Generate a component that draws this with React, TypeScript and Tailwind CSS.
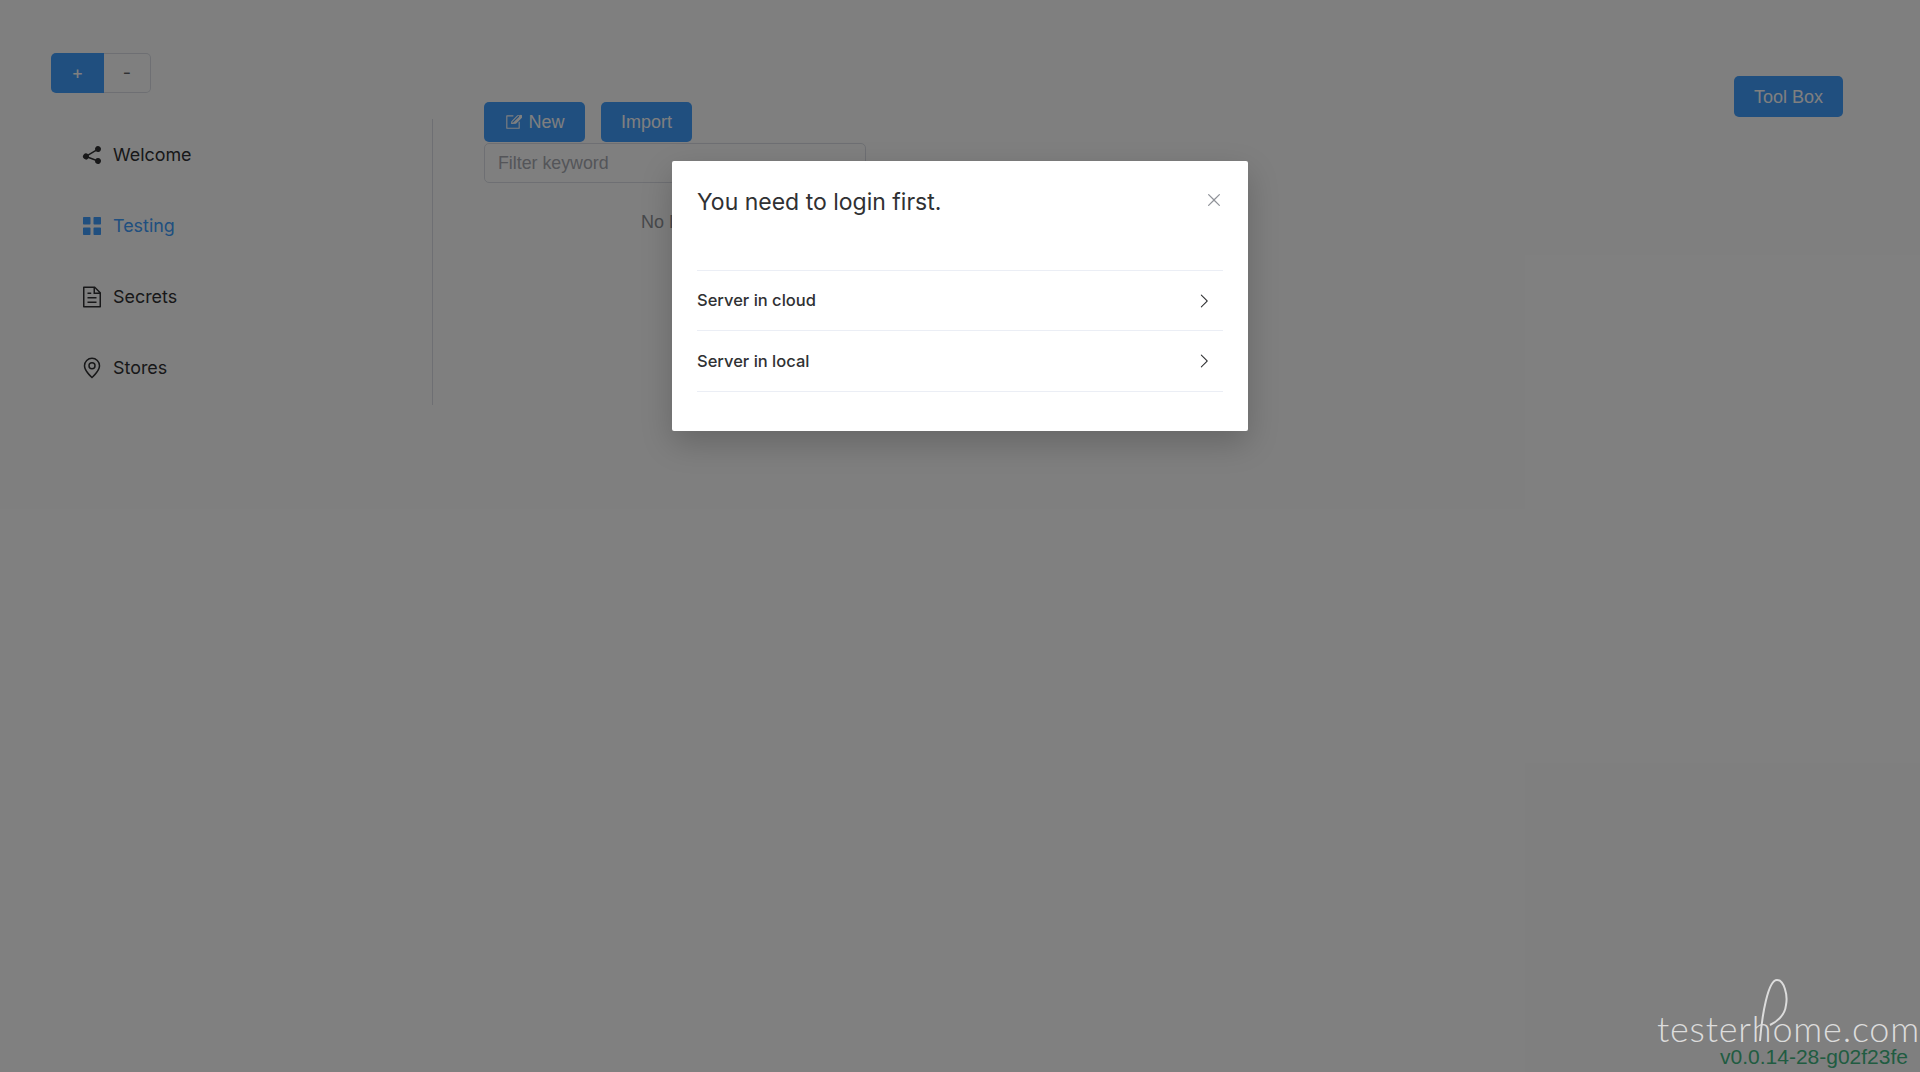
import React from "react";

const Icon = ({ d, className }: { d: string[]; className?: string }) => (
  <svg viewBox="0 0 1024 1024" fill="currentColor" className={className}>
    {d.map((p) => (
      <path key={p} d={p} />
    ))}
  </svg>
);

const share = ["M679.872 348.8l-301.76 188.608a127.808 127.808 0 0 1 5.12 52.16l279.936 104.96a128 128 0 1 1-22.464 59.904l-279.872-104.96a128 128 0 1 1-16.64-166.272l301.696-188.608a128 128 0 1 1 33.92 54.272z"];
const grid = ["M160 448a32 32 0 0 1-32-32V160.064a32 32 0 0 1 32-32h256a32 32 0 0 1 32 32V416a32 32 0 0 1-32 32H160zm448 0a32 32 0 0 1-32-32V160.064a32 32 0 0 1 32-32h255.936a32 32 0 0 1 32 32V416a32 32 0 0 1-32 32H608zM160 896a32 32 0 0 1-32-32V608a32 32 0 0 1 32-32h256a32 32 0 0 1 32 32v256a32 32 0 0 1-32 32H160zm448 0a32 32 0 0 1-32-32V608a32 32 0 0 1 32-32h255.936a32 32 0 0 1 32 32v256a32 32 0 0 1-32 32H608z"];
const doc = ["M832 384H576V128H192v768h640V384zm-26.496-64L640 154.496V320h165.504zM160 64h480l256 256v608a32 32 0 0 1-32 32H160a32 32 0 0 1-32-32V96a32 32 0 0 1 32-32zm160 448h384v64H320v-64zm0-192h160v64H320v-64zm0 384h384v64H320v-64z"];
const pin = [
  "M800 416a288 288 0 1 0-576 0c0 118.144 94.528 272.128 288 456.576C705.472 688.128 800 534.144 800 416zM512 960C277.312 746.688 160 565.312 160 416a352 352 0 0 1 704 0c0 149.312-117.312 330.688-352 544z",
  "M512 512a96 96 0 1 0 0-192 96 96 0 0 0 0 192zm0 64a160 160 0 1 1 0-320 160 160 0 0 1 0 320z",
];
const edit = [
  "M832 512a32 32 0 1 1 64 0v352a32 32 0 0 1-32 32H160a32 32 0 0 1-32-32V160a32 32 0 0 1 32-32h352a32 32 0 0 1 0 64H192v640h640V512z",
  "m469.952 554.24 52.8-7.552L847.104 222.4a32 32 0 1 0-45.248-45.248L477.44 501.44l-7.552 52.8zm422.4-422.4a96 96 0 0 1 135.808 135.744l-331.84 331.84a32 32 0 0 1-18.112 9.088L436.8 623.68a32 32 0 0 1-36.224-36.224l15.104-105.6a32 32 0 0 1 9.024-18.112l331.904-331.84z",
];
const arrow = ["M340.864 149.312a30.592 30.592 0 0 0 0 42.752L652.736 512 340.864 831.872a30.592 30.592 0 0 0 0 42.752 29.12 29.12 0 0 0 41.728 0L714.24 534.336a32 32 0 0 0 0-44.672L382.592 149.376a29.12 29.12 0 0 0-41.728 0z"];
const close = ["M764.288 214.592 512 466.88 259.712 214.592a31.936 31.936 0 0 0-45.12 45.12L466.752 512 214.528 764.224a31.936 31.936 0 1 0 45.12 45.184L512 557.184l252.288 252.288a31.936 31.936 0 0 0 45.12-45.12L557.12 512.064l252.288-252.352a31.936 31.936 0 1 0-45.12-45.184z"];

const menu = [
  { label: "Welcome", icon: share },
  { label: "Testing", icon: grid, active: true },
  { label: "Secrets", icon: doc },
  { label: "Stores", icon: pin },
];

const App = () => {
  return (
    <div className="relative h-[1072px] w-[1920px] overflow-hidden bg-white font-['Inter',sans-serif] text-[#303133]">
      <div className="flex h-full pl-[51px] pr-[77px] pt-[53px]">
        {/* left column */}
        <div className="w-[382px] shrink-0">
          <div className="flex h-10 w-[100px] text-lg">
            <div className="flex w-[53px] items-center justify-center rounded-l-[5px] bg-[#409eff] text-white">+</div>
            <div className="flex flex-1 items-center justify-center rounded-r-[5px] border border-l-0 border-[#dcdfe6] text-[#606266]">-</div>
          </div>
          <div className="mt-[26px] h-[286px] border-r border-[#dcdfe6] pt-px">
            {menu.map((m) => (
              <div
                key={m.label}
                className={`flex h-[71px] items-center gap-[9px] pl-[29px] text-[17.9px] ${m.active ? "text-[#409eff]" : ""}`}
              >
                <Icon d={m.icon} className="-mt-px h-6 w-6" />
                <span>{m.label}</span>
              </div>
            ))}
          </div>
        </div>

        {/* main */}
        <div className="ml-[51px] w-[382px] shrink-0 pt-[49px] font-['Liberation_Sans',sans-serif] text-lg">
          <div className="flex gap-4">
            <div className="flex h-10 w-[101px] items-center justify-center gap-[6px] rounded-[5px] bg-[#409eff] text-white">
              <Icon d={edit} className="h-[18px] w-[18px]" />
              New
            </div>
            <div className="flex h-10 w-[91px] items-center justify-center rounded-[5px] bg-[#409eff] text-white">Import</div>
          </div>
          <div className="mt-px flex h-10 items-center rounded-[5px] border border-[#dcdfe6] px-[13px] pt-[2px] text-[17.8px] text-[#a8abb2]">
            Filter keyword
          </div>
          <div className="-ml-[2px] flex h-[78px] items-center justify-center text-[#909399]">No Data</div>
        </div>

        <div className="ml-auto mt-[23px] flex h-[41px] w-[109px] items-center justify-center rounded-[5px] bg-[#409eff] font-['Liberation_Sans',sans-serif] text-lg text-white">
          Tool Box
        </div>
      </div>

      <div className="absolute bottom-[5px] right-3 font-['Liberation_Sans',sans-serif] text-[21px] leading-none text-[#42b983]">
        v0.0.14-28-g02f23fe
      </div>

      {/* overlay + dialog */}
      <div className="absolute inset-0 bg-black/50">
        <div className="absolute left-[672px] top-[161px] h-[270px] w-[576px] rounded-[2px] bg-white px-[25px] shadow-[0_12px_32px_rgba(0,0,0,0.2)]">
          <div className="flex h-[108px] items-start justify-between pt-[25px]">
            <span className="text-[23px] leading-8">You need to login first.</span>
            <Icon d={close} className="-mr-[1px] mt-[4px] h-5 w-5 text-[#909399]" />
          </div>
          <div className="pt-px">
            {["Server in cloud", "Server in local"].map((t, i) => (
              <div
                key={t}
                className={`flex h-[61px] items-center justify-between border-b border-[#ebeef5] pr-[10px] text-[16.5px] font-medium ${i === 0 ? "border-t" : ""}`}
              >
                {t}
                <Icon d={arrow} className="h-[18px] w-[18px]" />
              </div>
            ))}
          </div>
        </div>
      </div>

      {/* site watermark */}
      <div className="absolute bottom-[26px] right-0 whitespace-nowrap font-['Lato',sans-serif] text-[36px] font-light leading-none tracking-[0.8px] text-[#dcdcdc]">
        testerhome.com
      </div>
      <svg viewBox="0 0 50 75" className="absolute left-[1750px] top-[975px] h-[75px] w-[50px] fill-none stroke-[#dcdcdc] stroke-2">
        <path d="M10 66C12 40 18 5 27 5C34 5 38 20 36 30C35 40 28 46 20 50" />
      </svg>
    </div>
  );
};

export default App;
